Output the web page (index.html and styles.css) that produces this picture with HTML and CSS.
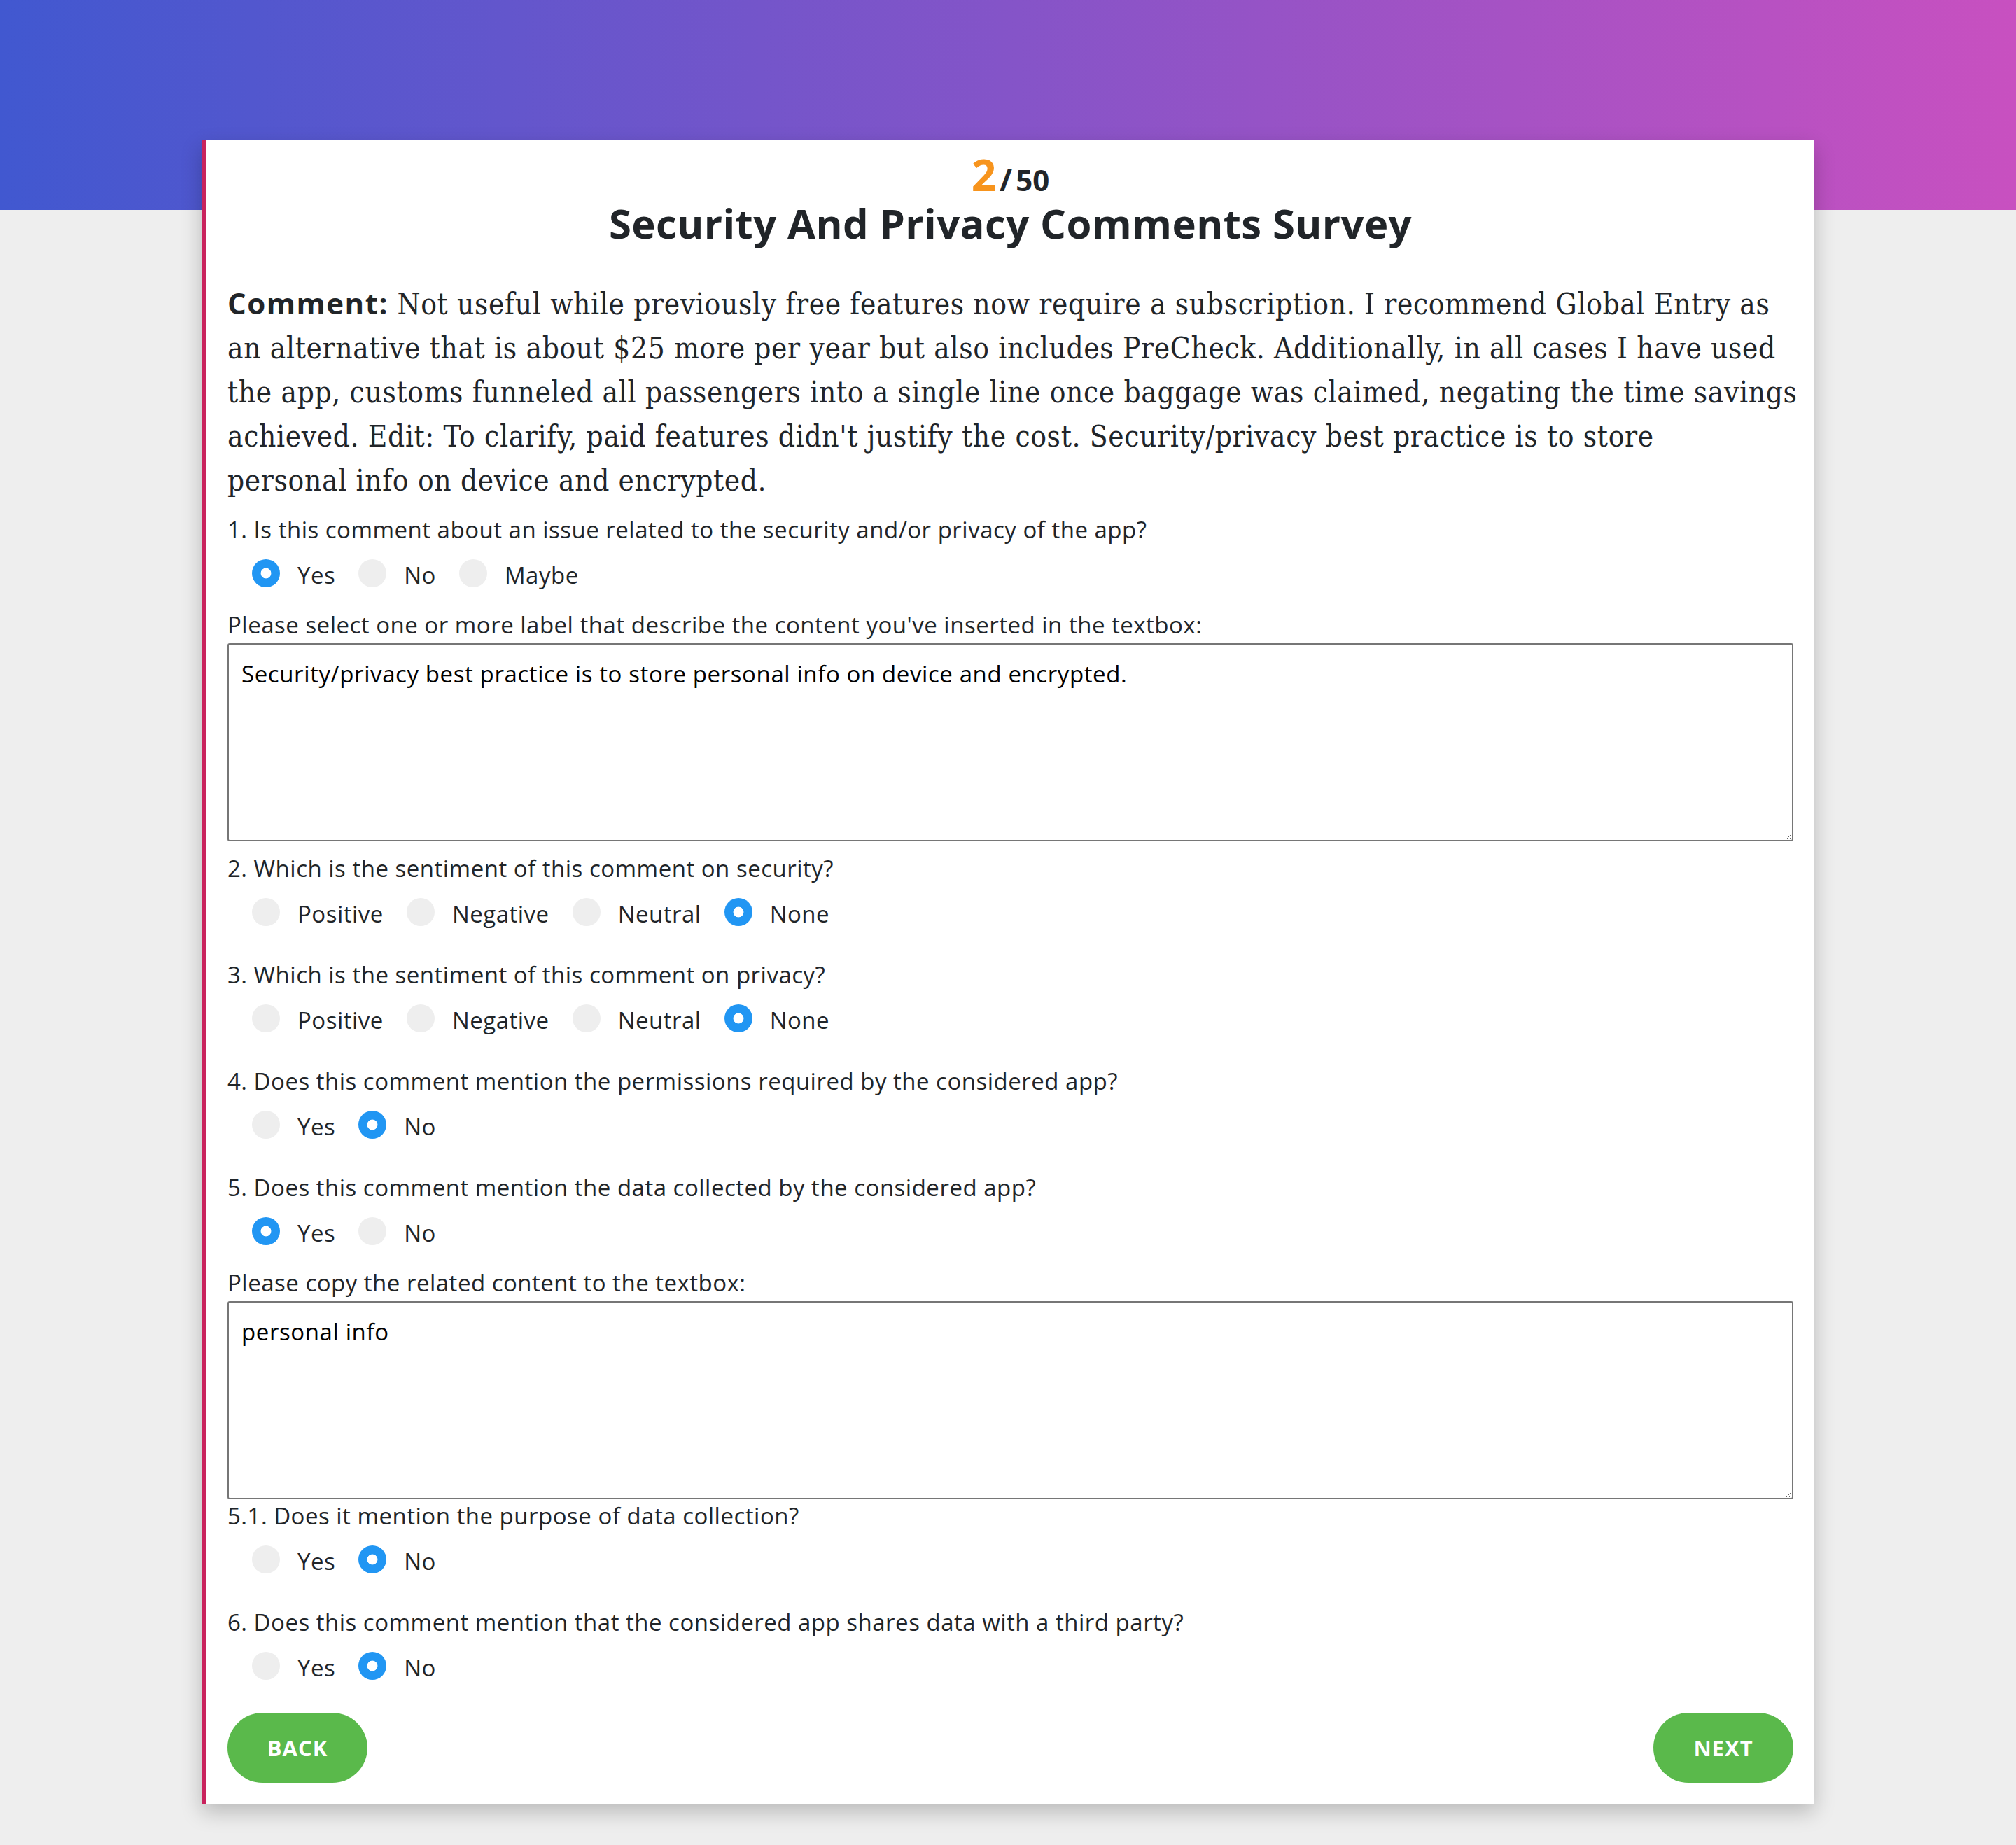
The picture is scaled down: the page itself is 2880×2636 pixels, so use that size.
FILE: index.html
```html
<!DOCTYPE html>
<html lang="en">
<head>
<meta charset="utf-8">
<title>Security And Privacy Comments Survey</title>
<link rel="stylesheet" href="styles.css">
</head>
<body>
<div class="page">
  <div class="card">
    <div class="counter"><span class="cur">2</span><span class="sep">/</span><span class="total">50</span></div>
    <h1 class="title">Security And Privacy Comments Survey</h1>
    <p class="comment"><strong class="comment-tag">Comment:</strong> Not useful while previously free features now require a subscription. I recommend Global Entry as<br>an alternative that is about $25 more per year but also includes PreCheck. Additionally, in all cases I have used<br>the app, customs funneled all passengers into a single line once baggage was claimed, negating the time savings<br>achieved. Edit: To clarify, paid features didn't justify the cost. Security/privacy best practice is to store<br>personal info on device and encrypted.</p>

    <div class="q q-first">
      <div class="q-label">1. Is this comment about an issue related to the security and/or privacy of the app?</div>
      <div class="radios">
        <label class="opt"><input type="radio" name="q1" checked><span>Yes</span></label>
        <label class="opt"><input type="radio" name="q1"><span>No</span></label>
        <label class="opt"><input type="radio" name="q1"><span>Maybe</span></label>
      </div>
      <div class="sub-label">Please select one or more label that describe the content you've inserted in the textbox:</div>
      <textarea class="box">Security/privacy best practice is to store personal info on device and encrypted.</textarea>
    </div>

    <div class="q q-after-box">
      <div class="q-label">2. Which is the sentiment of this comment on security?</div>
      <div class="radios">
        <label class="opt"><input type="radio" name="q2"><span>Positive</span></label>
        <label class="opt"><input type="radio" name="q2"><span>Negative</span></label>
        <label class="opt"><input type="radio" name="q2"><span>Neutral</span></label>
        <label class="opt"><input type="radio" name="q2" checked><span>None</span></label>
      </div>
    </div>

    <div class="q">
      <div class="q-label">3. Which is the sentiment of this comment on privacy?</div>
      <div class="radios">
        <label class="opt"><input type="radio" name="q3"><span>Positive</span></label>
        <label class="opt"><input type="radio" name="q3"><span>Negative</span></label>
        <label class="opt"><input type="radio" name="q3"><span>Neutral</span></label>
        <label class="opt"><input type="radio" name="q3" checked><span>None</span></label>
      </div>
    </div>

    <div class="q">
      <div class="q-label">4. Does this comment mention the permissions required by the considered app?</div>
      <div class="radios">
        <label class="opt"><input type="radio" name="q4"><span>Yes</span></label>
        <label class="opt"><input type="radio" name="q4" checked><span>No</span></label>
      </div>
    </div>

    <div class="q">
      <div class="q-label">5. Does this comment mention the data collected by the considered app?</div>
      <div class="radios">
        <label class="opt"><input type="radio" name="q5" checked><span>Yes</span></label>
        <label class="opt"><input type="radio" name="q5"><span>No</span></label>
      </div>
      <div class="sub-label">Please copy the related content to the textbox:</div>
      <textarea class="box">personal info</textarea>
    </div>

    <div class="q q-sub">
      <div class="q-label">5.1. Does it mention the purpose of data collection?</div>
      <div class="radios">
        <label class="opt"><input type="radio" name="q51"><span>Yes</span></label>
        <label class="opt"><input type="radio" name="q51" checked><span>No</span></label>
      </div>
    </div>

    <div class="q">
      <div class="q-label">6. Does this comment mention that the considered app shares data with a third party?</div>
      <div class="radios">
        <label class="opt"><input type="radio" name="q6"><span>Yes</span></label>
        <label class="opt"><input type="radio" name="q6" checked><span>No</span></label>
      </div>
    </div>

    <div class="nav">
      <button class="btn" type="button">BACK</button>
      <button class="btn" type="button">NEXT</button>
    </div>
  </div>
</div>
</body>
</html>
```
FILE: styles.css
```css
* { box-sizing: border-box; }

html, body {
  margin: 0;
  padding: 0;
  background: #eeeeee;
}

body {
  font-family: "Open Sans", "Noto Sans", sans-serif;
  color: #212529;
}

.page {
  min-height: 2636px;
  padding-top: 200px;
  background: linear-gradient(90deg, #4158d0 0%, #c850c0 100%) top left / 100% 300px no-repeat, #eeeeee;
}

.card {
  width: 2304px;
  margin: 0 auto;
  background: #ffffff;
  border-left: 6px solid #c9235d;
  padding: 18px 30px 30px 31px;
  box-shadow: 0 12px 28px rgba(0, 0, 0, 0.22);
}

.counter {
  text-align: center;
  font-size: 62px;
  line-height: 62px;
  height: 62px;
  font-weight: 700;
}

.counter .cur {
  color: #f7941d;
  line-height: 1;
}

.counter .sep {
  font-size: 44px;
  line-height: 1;
  margin-left: 5px;
  margin-right: 5px;
}

.counter .total {
  font-size: 42px;
  line-height: 1;
}

.title {
  margin: 5px 0 0;
  text-align: center;
  font-size: 58px;
  line-height: 68px;
  letter-spacing: 0.4px;
  font-weight: 700;
  color: #212529;
}

.comment {
  margin: 50px 0 0;
  font-family: "DejaVu Serif Condensed", "DejaVu Serif", serif;
  font-stretch: condensed;
  font-size: 42px;
  line-height: 63px;
  letter-spacing: 0.65px;
  white-space: nowrap;
  color: #212529;
}

.comment-tag {
  font-family: "Open Sans", sans-serif;
  font-stretch: normal;
  font-size: 42px;
  line-height: 1;
  letter-spacing: 1.5px;
  font-weight: 700;
}

.q { margin-top: 46px; }
.q.q-first { margin-top: 15px; }
.q.q-after-box { margin-top: 15px; }
.q.q-sub { margin-top: 0; }

.q-label,
.sub-label {
  font-size: 33px;
  line-height: 48px;
  letter-spacing: 0.5px;
}

.radios {
  display: flex;
  align-items: center;
  gap: 33px;
  height: 40px;
  margin-top: 18px;
  padding-left: 35px;
}

.opt {
  display: flex;
  align-items: center;
  gap: 25px;
  font-size: 33px;
  line-height: 48px;
  letter-spacing: 0.5px;
}

.opt span {
  padding-top: 6px;
}

.opt input {
  appearance: none;
  -webkit-appearance: none;
  width: 40px;
  height: 40px;
  margin: 0;
  border-radius: 50%;
  background: #eeeeee;
  border: none;
  flex: none;
}

.opt input:checked {
  background: radial-gradient(circle, #ffffff 0 7px, #2196f3 7.8px);
}

.sub-label { margin-top: 30px; }

.box {
  display: block;
  width: 100%;
  height: 283px;
  margin-top: 2px;
  padding: 18px 18px;
  border: 2px solid #767676;
  border-radius: 3px;
  font-family: "Open Sans", sans-serif;
  font-size: 33px;
  line-height: 48px;
  letter-spacing: 0.6px;
  color: #000000;
  background: #ffffff;
  resize: vertical;
}

.nav {
  display: flex;
  justify-content: space-between;
  margin-top: 47px;
}

.btn {
  width: 200px;
  height: 100px;
  border: none;
  border-radius: 50px;
  background: #5ab94b;
  color: #ffffff;
  font-family: "Open Sans", sans-serif;
  font-size: 31px;
  font-weight: 700;
  letter-spacing: 1px;
  padding: 0;
}
```
